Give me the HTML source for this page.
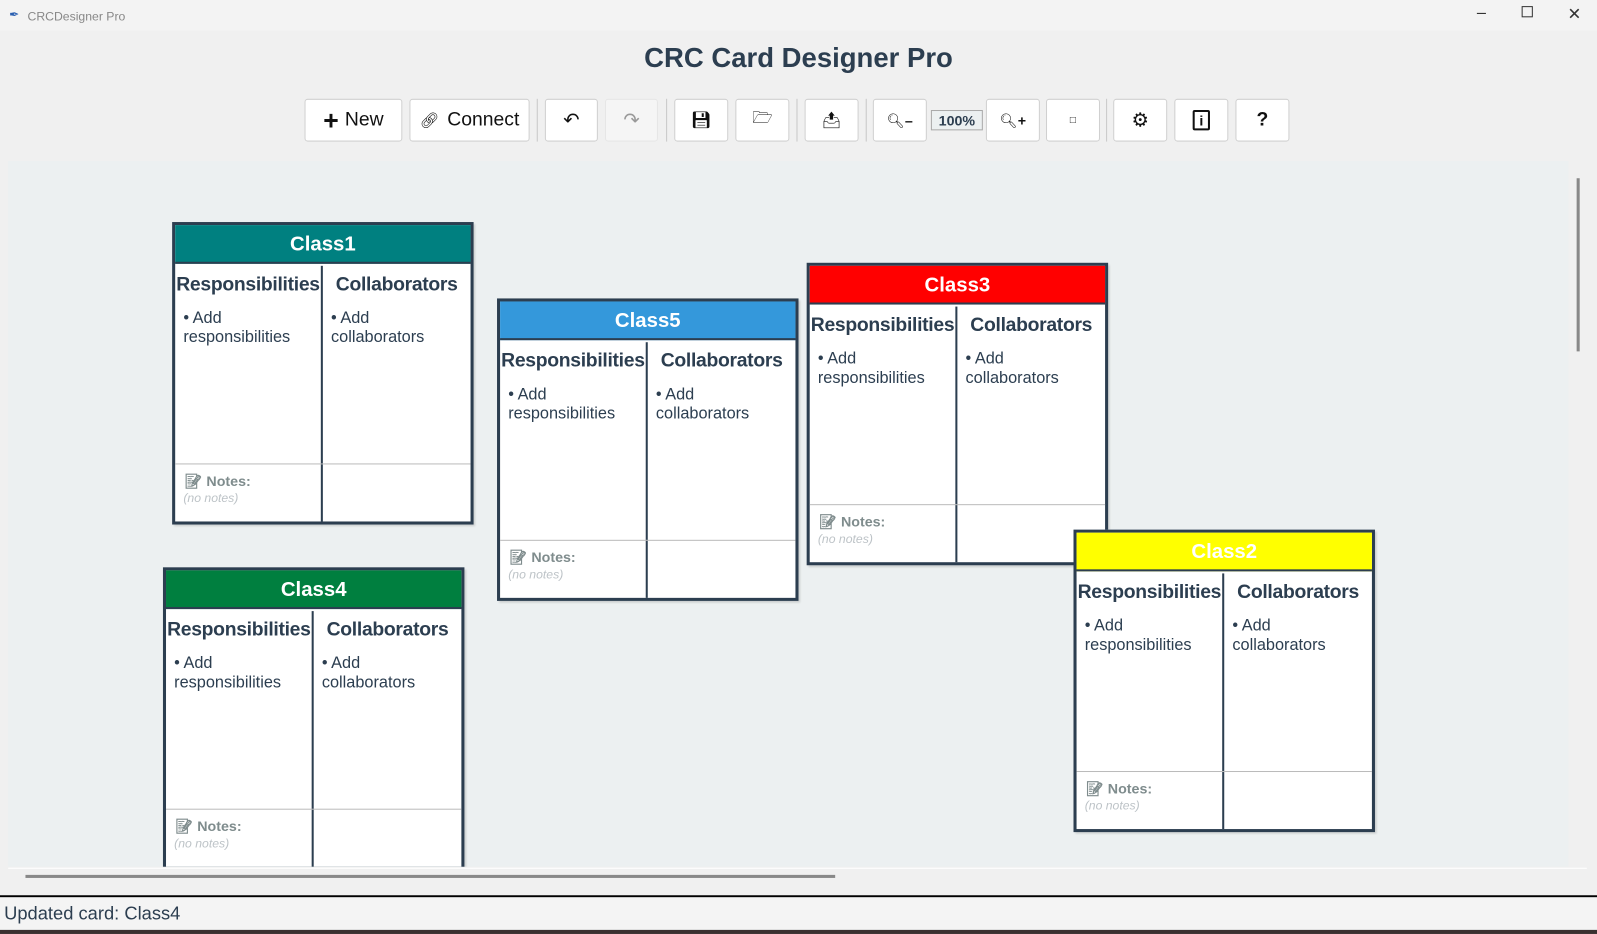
<!DOCTYPE html>
<html><head><meta charset="utf-8"><style>
*{box-sizing:border-box;margin:0;padding:0}
html,body{width:1597px;height:934px;overflow:hidden;background:#3a3030;font-family:"Liberation Sans",Arial,sans-serif}
#w{position:absolute;left:0;top:0;width:1568px;height:917px;transform:scale(1.0185);transform-origin:0 0;background:#f0f0f0}
.tb{position:absolute;left:0;top:0;width:1568px;height:30px;background:#f3f3f3;font-size:12px;color:#888}
.ttl{position:absolute;left:0;width:1568px;top:42px;text-align:center;font-weight:bold;font-size:27px;color:#2c3e50}
.btn{position:absolute;top:97px;height:42px;background:#fff;border:1px solid #d0d0d0;border-radius:3px;display:flex;align-items:center;justify-content:center;font-size:19px;color:#111}
.sep{position:absolute;top:97px;width:1px;height:42px;background:#c8c8c8}
.canvas{position:absolute;left:8px;top:158px;width:1532px;height:693px;background:#ecf0f1;overflow:hidden}
.card{position:absolute;width:296px;height:297px;border:3px solid #2c3e50;background:#fff;box-shadow:2px 2px 2px rgba(0,0,0,.15)}
.hd{height:38px;border-bottom:2px solid #2c3e50;color:#fff;font-weight:bold;font-size:20px;text-align:center;line-height:38px}
.col{position:absolute;top:40px;bottom:0;width:145px}
.c1{left:0;border-right:2px solid #2c3e50}
.c2{left:145px}
.h{font-weight:bold;font-size:19px;color:#2c3e50;text-align:center;margin-top:8px;letter-spacing:-0.3px}
.b{font-size:16px;color:#2c3e50;margin:12px 0 0 8px;line-height:19px}
.nl{position:absolute;left:0;right:0;top:234px;height:1px;background:#bbb}
.nt{position:absolute;left:9px;top:243px;font-size:14px;font-weight:bold;color:#7f8c8d}
.nn{position:absolute;left:8px;top:261px;font-size:12px;font-style:italic;color:#bdc3c7}
</style></head><body><div id="w">
<div class="tb"><span style="position:absolute;left:9px;top:7px;color:#2a5fb0">&#10002;</span><span style="position:absolute;left:27px;top:9px">CRCDesigner Pro</span>
<span style="position:absolute;left:1450px;top:4px;font-size:16px;color:#333">&#8211;</span><span style="position:absolute;left:1494px;top:6px;width:11px;height:11px;border:1px solid #333"></span><span style="position:absolute;left:1539px;top:4px;font-size:16px;color:#333">&#10005;</span></div>
<div class="ttl">CRC Card Designer Pro</div>

<div class="btn" style="left:299px;width:96px"><b style="font-size:26px;margin-right:6px">+</b>New</div>
<div class="btn" style="left:402px;width:118px"><span style="font-size:15px;margin-right:8px">&#128279;&#xFE0E;</span>Connect</div>
<div class="sep" style="left:527px"></div>
<div class="btn" style="left:535px;width:52px">&#8630;</div>
<div class="btn" style="left:594px;width:52px;background:#f5f5f5;color:#999;border-color:#e6e6e6">&#8631;</div>
<div class="sep" style="left:654px"></div>
<div class="btn" style="left:662px;width:53px;font-size:16px">&#128190;&#xFE0E;</div>
<div class="btn" style="left:722px;width:53px;font-size:16px">&#128449;&#xFE0E;</div>
<div class="sep" style="left:782px"></div>
<div class="btn" style="left:790px;width:53px;font-size:16px">&#128228;&#xFE0E;</div>
<div class="sep" style="left:850px"></div>
<div class="btn" style="left:857px;width:53px;font-size:14px">&#128269;&#xFE0E;<b>&#8211;</b></div>
<div style="position:absolute;left:914px;top:108px;width:51px;height:20px;border:1px solid #aaa;background:#ecf0f1;font-size:14px;font-weight:bold;color:#2c3e50;text-align:center;line-height:18px">100%</div>
<div class="btn" style="left:968px;width:53px;font-size:14px">&#128269;&#xFE0E;<b>+</b></div>
<div class="btn" style="left:1027px;width:53px;font-size:10px">&#9633;</div>
<div class="sep" style="left:1086px"></div>
<div class="btn" style="left:1093px;width:53px">&#9881;</div>
<div class="btn" style="left:1153px;width:53px"><span style="display:inline-block;width:17px;height:20px;border:2px solid #111;border-radius:2px;font-size:14px;font-weight:bold;line-height:16px;text-align:center">i</span></div>
<div class="btn" style="left:1213px;width:53px;font-weight:bold">?</div>

<div class="canvas">
<div class="card" style="left:161px;top:60px"><div class="hd" style="background:#008080">Class1</div><div class="col c1"><div class="h">Responsibilities</div><div class="b">• Add<br>responsibilities</div></div><div class="col c2"><div class="h">Collaborators</div><div class="b">• Add<br>collaborators</div></div><div class="nl"></div><div class="nt">&#128221;&#xFE0E; Notes:</div><div class="nn">(no notes)</div></div>
<div class="card" style="left:480px;top:135px"><div class="hd" style="background:#3498db">Class5</div><div class="col c1"><div class="h">Responsibilities</div><div class="b">• Add<br>responsibilities</div></div><div class="col c2"><div class="h">Collaborators</div><div class="b">• Add<br>collaborators</div></div><div class="nl"></div><div class="nt">&#128221;&#xFE0E; Notes:</div><div class="nn">(no notes)</div></div>
<div class="card" style="left:784px;top:100px"><div class="hd" style="background:#ff0000">Class3</div><div class="col c1"><div class="h">Responsibilities</div><div class="b">• Add<br>responsibilities</div></div><div class="col c2"><div class="h">Collaborators</div><div class="b">• Add<br>collaborators</div></div><div class="nl"></div><div class="nt">&#128221;&#xFE0E; Notes:</div><div class="nn">(no notes)</div></div>
<div class="card" style="left:1046px;top:362px"><div class="hd" style="background:#ffff00">Class2</div><div class="col c1"><div class="h">Responsibilities</div><div class="b">• Add<br>responsibilities</div></div><div class="col c2"><div class="h">Collaborators</div><div class="b">• Add<br>collaborators</div></div><div class="nl"></div><div class="nt">&#128221;&#xFE0E; Notes:</div><div class="nn">(no notes)</div></div>
<div class="card" style="left:152px;top:399px"><div class="hd" style="background:#007f3f">Class4</div><div class="col c1"><div class="h">Responsibilities</div><div class="b">• Add<br>responsibilities</div></div><div class="col c2"><div class="h">Collaborators</div><div class="b">• Add<br>collaborators</div></div><div class="nl"></div><div class="nt">&#128221;&#xFE0E; Notes:</div><div class="nn">(no notes)</div></div>
</div>
<div style="position:absolute;left:1548px;top:175px;width:3px;height:170px;background:#888"></div>
<div style="position:absolute;left:8px;top:852px;width:1550px;height:1px;background:#fff"></div>
<div style="position:absolute;left:25px;top:859px;width:795px;height:3px;background:#888"></div>
<div style="position:absolute;left:0;top:879px;width:1568px;height:2px;background:#000"></div>
<div style="position:absolute;left:0;top:881px;width:1568px;height:32px;background:#f4f4f4;font-size:18px;color:#2c3e50;padding:6px 0 0 4px">Updated card: Class4</div>
<div style="position:absolute;left:0;top:913px;width:1568px;height:4px;background:#3a3030"></div>
</div></body></html>
